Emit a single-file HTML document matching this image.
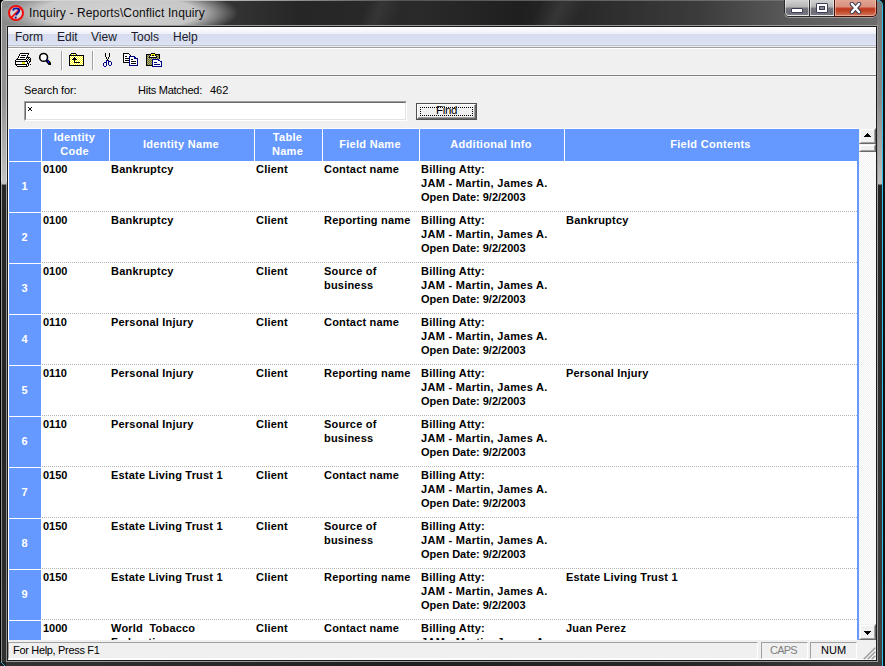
<!DOCTYPE html>
<html><head><meta charset="utf-8">
<style>
*{margin:0;padding:0;box-sizing:border-box}
html,body{width:885px;height:666px;overflow:hidden;background:#222;font-family:"Liberation Sans",sans-serif}
.a{position:absolute}
svg{shape-rendering:crispEdges;display:block}
.mi{top:30px;font-size:12px;color:#1b1b2b;line-height:14px;white-space:nowrap}
.lbl{font-size:11px;color:#000;line-height:13px;white-space:nowrap}
.ht{letter-spacing:0.3px;top:127px;height:33px;display:flex;align-items:center;justify-content:center;text-align:center;color:#fff;font-weight:bold;font-size:11px;line-height:14px}
.hs{top:128px;width:1px;height:33px;background:#fff}
.rh{left:9px;width:32px;background:#6699ff;color:#fff;font-weight:bold;font-size:11px;display:flex;align-items:center;justify-content:center;padding-right:1px;padding-bottom:2px}
.rsep{left:9px;width:31px;height:1px;background:#fff}
.dot{left:42px;width:815px;height:1px;background:repeating-linear-gradient(90deg,#b6b6b6 0,#b6b6b6 1px,transparent 1px,transparent 2px)}
.c{font-weight:bold;font-size:11px;line-height:14px;color:#000;white-space:nowrap;letter-spacing:0.2px}
</style></head><body>
<!-- frame -->
<div class="a" style="left:0;top:0;width:885px;height:27px;background:linear-gradient(90deg,#8c8c8c 0,#7a7a7a 30px,#3a3a3a 200px,#262626 300px,#2a2a2a 420px,#1f1f1f 520px,#2c2c2c 600px,#3c3c3c 700px,#5a5a5a 790px,#6e6e6e 885px)"></div>
<div class="a" style="left:300px;top:0;width:140px;height:27px;background:linear-gradient(110deg,transparent 0,transparent 45%,rgba(255,255,255,0.06) 55%,transparent 70%)"></div>
<div class="a" style="left:480px;top:0;width:140px;height:27px;background:linear-gradient(115deg,transparent 0,transparent 40%,rgba(255,255,255,0.08) 55%,transparent 70%)"></div>
<div class="a" style="left:-2px;top:-14px;width:240px;height:54px;background:radial-gradient(ellipse 50% 50% at 50% 50%,rgba(212,212,212,1) 0%,rgba(205,205,205,0.95) 66%,rgba(170,170,170,0) 100%)"></div>
<div class="a" style="left:0;top:27px;width:8px;height:639px;background:linear-gradient(180deg,#8a8a8a 0,#939393 70px,#c2c2c2 157px,#262626 158px,#242424 400px,#303030 639px)"></div>
<div class="a" style="left:877px;top:0;width:8px;height:666px;background:linear-gradient(180deg,#767676 0,#8a8a8a 100px,#c0c0c0 184px,#262626 185px,#2a2a2a 330px,#3c3c3c 560px,#444 666px)"></div>
<div class="a" style="left:0;top:660px;width:885px;height:6px;background:linear-gradient(90deg,#333 0,#2a2a2a 150px,#1e1e1e 400px,#262626 700px,#3c3c3c 885px)"></div>
<div class="a" style="left:0;top:0;width:1px;height:666px;background:#000"></div>
<div class="a" style="left:1px;top:3px;width:1px;height:663px;background:linear-gradient(180deg,#c8c8c8 0,#e0e0e0 178px,#9a9a9a 182px,#8c8c8c 663px)"></div>
<div class="a" style="left:0;top:0;width:885px;height:1px;background:linear-gradient(90deg,#000 0,#d8d8d8 6px,#c8c8c8 200px,#555 400px,#777 885px)"></div><svg class="a" style="left:0;top:0;shape-rendering:auto" width="8" height="8" viewBox="0 0 8 8"><rect width="8" height="8" fill="#8c8c8c"/><path d="M0 0 H4.5 Q1 0.5 1 4.5 V8 H0 Z" fill="#000"/><path d="M8 0.5 H5 Q1.5 0.5 1.5 5 V8" fill="none" stroke="#d8d8d8" stroke-width="1"/></svg>
<div class="a" style="left:6px;top:25px;width:872px;height:637px;border:1px solid #9a9a9a"></div>
<div class="a" style="left:7px;top:26px;width:870px;height:635px;border:1px solid #1a1a1a"></div><div class="a" style="left:6px;top:26px;width:1px;height:635px;background:linear-gradient(180deg,#b0b0b0 0,#e0e0e0 155px,#9a9a9a 160px,#8a8a8a 635px)"></div>
<div class="a" style="left:882px;top:6px;width:1px;height:660px;background:#2ec0ee"></div><svg class="a" style="left:877px;top:0;shape-rendering:auto" width="8" height="12" viewBox="0 0 8 12"><rect width="8" height="12" fill="#121010"/><path d="M0 0 H0.5 Q5.5 0.5 5.5 5.5 V12 H0 Z" fill="#7c7c7c"/><path d="M0 0.5 Q5.5 0.5 5.5 5.5 V12" fill="none" stroke="#2ec0ee" stroke-width="1"/></svg>
<div class="a" style="left:883px;top:6px;width:2px;height:660px;background:#141010"></div>
<div class="a" style="left:0;top:662px;width:6px;height:4px;background:linear-gradient(45deg,#1f1f1f 0,#1f1f1f 40%,#3aa6c8 50%,#1f1f1f 60%)"></div>
<!-- icon -->
<svg class="a" style="left:8px;top:5px;shape-rendering:auto" width="16" height="16" viewBox="0 0 16 16">
<circle cx="8" cy="8" r="7" fill="#d2d2d2" stroke="#f20d0d" stroke-width="2"/>
<line x1="13.2" y1="2.8" x2="2.8" y2="13.2" stroke="#f20d0d" stroke-width="1.7"/>
<path d="M5.1 5.6 C5.3 4.1 6.6 3.4 8.1 3.4 C9.9 3.4 11.2 4.4 11.2 5.8 C11.2 7.7 8.4 8.1 8 10.4" fill="none" stroke="#1414a0" stroke-width="1.8"/>
<circle cx="7.7" cy="12.5" r="1.1" fill="#1414a0"/>
</svg>
<div class="a" style="left:29px;top:6px;font-size:12px;line-height:15px;color:#0d0d0d;white-space:nowrap;letter-spacing:0.13px">Inquiry - Reports\Conflict Inquiry</div>
<!-- caption buttons -->
<div class="a" style="left:784px;top:-2px;width:93px;height:19px;border:1px solid #2a2a2a;border-radius:0 0 5px 5px;background:#555;box-shadow:0 1px 0 rgba(255,255,255,0.35)"></div>
<div class="a" style="left:785px;top:0;width:24px;height:16px;border:1px solid rgba(255,255,255,0.55);border-top:0;border-radius:0 0 0 4px;background:linear-gradient(180deg,#d2d2d2 0,#b4b4b4 7px,#7a7a82 8px,#6c6c76 12px,#80808a 16px)"></div>
<div class="a" style="left:809px;top:0;width:1px;height:16px;background:#2a2a2a"></div>
<div class="a" style="left:810px;top:0;width:24px;height:16px;border:1px solid rgba(255,255,255,0.55);border-top:0;background:linear-gradient(180deg,#d2d2d2 0,#b4b4b4 7px,#7a7a82 8px,#6c6c76 12px,#80808a 16px)"></div>
<div class="a" style="left:834px;top:0;width:43px;height:17px;border:1px solid #4a1008;border-top:0;border-radius:0 0 5px 0;background:linear-gradient(180deg,#e2a494 0,#d98f7c 7px,#c4432a 8px,#bf3b20 10px,#c85a3c 13px,#d27a60 16px)"></div>
<div class="a" style="left:835px;top:0;width:41px;height:16px;border:1px solid rgba(255,220,210,0.5);border-top:0;border-radius:0 0 4px 0"></div>
<div class="a" style="left:791px;top:8px;width:12px;height:5px;background:#fff;border:1px solid #3a3e58;border-radius:1px"></div>
<div class="a" style="left:816px;top:3px;width:12px;height:10px;background:#fff;border:1px solid #3a3e58;border-radius:1px"></div>
<div class="a" style="left:819px;top:6px;width:6px;height:4px;background:#8a8a90;border:1px solid #3a3e58"></div>
<svg class="a" style="left:849px;top:2px;shape-rendering:auto" width="13" height="12" viewBox="0 0 13 12">
<path d="M3 2 L10 10 M10 2 L3 10" fill="none" stroke="#3c405a" stroke-width="4.4" stroke-linecap="round"/>
<path d="M3 2 L10 10 M10 2 L3 10" fill="none" stroke="#fff" stroke-width="2.4" stroke-linecap="round"/>
</svg>
<!-- client -->
<div class="a" style="left:8px;top:27px;width:868px;height:633px;background:#f0f0f0"></div>
<div class="a" style="left:8px;top:27px;width:868px;height:18px;background:linear-gradient(180deg,#ffffff 0,#f0f3fb 6px,#e9edf8 7px,#d6dcee 7px,#d9dff0 14px,#dfe4f3 18px)"></div>
<div class="a" style="left:8px;top:45px;width:868px;height:1px;background:#bcc3d6"></div>
<div class="a" style="left:8px;top:46px;width:868px;height:1px;background:#ececec"></div>
<div class="a" style="left:8px;top:47px;width:868px;height:1px;background:#a0a0a0"></div>
<div class="a" style="left:8px;top:48px;width:868px;height:1px;background:#fff"></div>
<div class="a mi" style="left:15px">Form</div>
<div class="a mi" style="left:57px">Edit</div>
<div class="a mi" style="left:91px">View</div>
<div class="a mi" style="left:131px">Tools</div>
<div class="a mi" style="left:173px">Help</div>
<!-- toolbar -->
<div class="a" style="left:8px;top:74px;width:868px;height:1px;background:#f8f8f8"></div>
<div class="a" style="left:8px;top:75px;width:868px;height:1px;background:#808080"></div>
<div class="a" style="left:8px;top:76px;width:868px;height:1px;background:#f8f8f8"></div>
<div class="a" style="left:61px;top:51px;width:1px;height:19px;background:#a0a0a0"></div>
<div class="a" style="left:62px;top:51px;width:1px;height:19px;background:#fff"></div>
<div class="a" style="left:92px;top:51px;width:1px;height:19px;background:#a0a0a0"></div>
<div class="a" style="left:93px;top:51px;width:1px;height:19px;background:#fff"></div>
<!-- printer -->
<svg class="a" style="left:13px;top:50px" width="20" height="20" viewBox="0 0 20 20"><rect x="7" y="3" width="9" height="1" fill="#000"/><rect x="6" y="4" width="1" height="1" fill="#000"/><rect x="7" y="4" width="8" height="1" fill="#fff"/><rect x="15" y="4" width="1" height="1" fill="#000"/><rect x="6" y="5" width="1" height="1" fill="#000"/><rect x="7" y="5" width="1" height="1" fill="#fff"/><rect x="8" y="5" width="5" height="1" fill="#000"/><rect x="13" y="5" width="1" height="1" fill="#fff"/><rect x="14" y="5" width="1" height="1" fill="#000"/><rect x="5" y="6" width="1" height="1" fill="#000"/><rect x="6" y="6" width="8" height="1" fill="#fff"/><rect x="14" y="6" width="1" height="1" fill="#000"/><rect x="5" y="7" width="1" height="1" fill="#000"/><rect x="6" y="7" width="1" height="1" fill="#fff"/><rect x="7" y="7" width="5" height="1" fill="#000"/><rect x="12" y="7" width="1" height="1" fill="#fff"/><rect x="13" y="7" width="4" height="1" fill="#000"/><rect x="4" y="8" width="1" height="1" fill="#000"/><rect x="5" y="8" width="8" height="1" fill="#fff"/><rect x="13" y="8" width="1" height="1" fill="#000"/><rect x="14" y="8" width="1" height="1" fill="#fff"/><rect x="15" y="8" width="1" height="1" fill="#000"/><rect x="16" y="8" width="1" height="1" fill="#fff"/><rect x="17" y="8" width="1" height="1" fill="#000"/><rect x="3" y="9" width="10" height="1" fill="#000"/><rect x="13" y="9" width="1" height="1" fill="#fff"/><rect x="14" y="9" width="1" height="1" fill="#000"/><rect x="15" y="9" width="1" height="1" fill="#fff"/><rect x="16" y="9" width="2" height="1" fill="#000"/><rect x="2" y="10" width="1" height="1" fill="#000"/><rect x="3" y="10" width="10" height="1" fill="#fff"/><rect x="13" y="10" width="1" height="1" fill="#000"/><rect x="14" y="10" width="1" height="1" fill="#fff"/><rect x="15" y="10" width="1" height="1" fill="#000"/><rect x="16" y="10" width="1" height="1" fill="#fff"/><rect x="17" y="10" width="1" height="1" fill="#000"/><rect x="2" y="11" width="13" height="1" fill="#000"/><rect x="15" y="11" width="1" height="1" fill="#fff"/><rect x="16" y="11" width="2" height="1" fill="#000"/><rect x="2" y="12" width="1" height="1" fill="#000"/><rect x="3" y="12" width="6" height="1" fill="#fff"/><rect x="9" y="12" width="3" height="1" fill="#e8e800"/><rect x="12" y="12" width="2" height="1" fill="#fff"/><rect x="14" y="12" width="1" height="1" fill="#000"/><rect x="15" y="12" width="1" height="1" fill="#fff"/><rect x="16" y="12" width="1" height="1" fill="#000"/><rect x="2" y="13" width="1" height="1" fill="#000"/><rect x="3" y="13" width="6" height="1" fill="#fff"/><rect x="9" y="13" width="3" height="1" fill="#e8e800"/><rect x="12" y="13" width="2" height="1" fill="#fff"/><rect x="14" y="13" width="2" height="1" fill="#000"/><rect x="2" y="14" width="12" height="1" fill="#000"/><rect x="14" y="14" width="1" height="1" fill="#fff"/><rect x="15" y="14" width="1" height="1" fill="#000"/><rect x="16" y="14" width="1" height="1" fill="#fff"/><rect x="17" y="14" width="1" height="1" fill="#000"/><rect x="3" y="15" width="1" height="1" fill="#000"/><rect x="4" y="15" width="9" height="1" fill="#fff"/><rect x="13" y="15" width="1" height="1" fill="#000"/><rect x="14" y="15" width="1" height="1" fill="#fff"/><rect x="15" y="15" width="1" height="1" fill="#000"/><rect x="4" y="16" width="11" height="1" fill="#000"/></svg>
<!-- magnifier -->
<svg class="a" style="left:36px;top:50px;shape-rendering:auto" width="20" height="20" viewBox="0 0 20 20">
<circle cx="7.6" cy="7.4" r="3.9" fill="#fff" stroke="#000" stroke-width="1.6"/>
<path d="M10.2 9.6 L12 9.4 L15 12.6 L15 15 L12.6 15 L9.8 11.6 Z" fill="#000"/>
<rect x="10.2" y="9.2" width="1.3" height="1.4" fill="#1010c0"/><rect x="11.8" y="11" width="1.2" height="2" fill="#1010f0"/>
</svg>
<!-- folder -->
<svg class="a" style="left:66px;top:50px" width="20" height="20" viewBox="0 0 20 20">
<defs><pattern id="ck" width="2" height="2" patternUnits="userSpaceOnUse"><rect width="2" height="2" fill="#ffff00"/><rect width="1" height="1" fill="#fff"/><rect x="1" y="1" width="1" height="1" fill="#fff"/></pattern>
<pattern id="ol" width="2" height="2" patternUnits="userSpaceOnUse"><rect width="2" height="2" fill="#808000"/><rect width="1" height="1" fill="#a0a0a0"/><rect x="1" y="1" width="1" height="1" fill="#a0a0a0"/></pattern></defs>
<rect x="5" y="3" width="5" height="1" fill="#000"/><rect x="4" y="4" width="7" height="1" fill="#000"/><rect x="5" y="4" width="5" height="1" fill="url(#ck)"/>
<rect x="3" y="5" width="15" height="11" fill="#000"/><rect x="4" y="6" width="13" height="9" fill="url(#ck)"/>
<g fill="#000"><rect x="8" y="7" width="1" height="1"/><rect x="7" y="8" width="3" height="1"/><rect x="6" y="9" width="5" height="1"/><rect x="8" y="10" width="1" height="3"/><rect x="8" y="12" width="6" height="1"/></g>
</svg>
<!-- scissors -->
<svg class="a" style="left:98px;top:50px" width="20" height="20" viewBox="0 0 20 20">
<g fill="#000"><rect x="7" y="3" width="1" height="4"/><rect x="11" y="3" width="1" height="4"/><rect x="8" y="7" width="1" height="2"/><rect x="10" y="7" width="1" height="2"/><rect x="9" y="9" width="1" height="2"/></g>
<g fill="#000088"><rect x="8" y="10" width="1" height="1"/><rect x="10" y="10" width="1" height="1"/><rect x="6" y="12" width="2" height="1"/><rect x="5" y="13" width="1" height="3"/><rect x="8" y="11" width="1" height="5"/><rect x="6" y="16" width="2" height="1"/>
<rect x="10" y="11" width="1" height="4"/><rect x="11" y="11" width="2" height="1"/><rect x="13" y="12" width="1" height="3"/><rect x="11" y="15" width="2" height="1"/></g>
</svg>
<!-- copy -->
<svg class="a" style="left:120px;top:50px" width="20" height="20" viewBox="0 0 20 20">
<rect x="3" y="3" width="6" height="10" fill="#000"/><rect x="4" y="4" width="5" height="8" fill="#fff"/>
<rect x="9" y="4" width="1" height="1" fill="#000"/><rect x="10" y="5" width="1" height="1" fill="#000"/>
<g fill="#000"><rect x="5" y="6" width="2" height="1"/><rect x="5" y="8" width="4" height="1"/><rect x="5" y="10" width="4" height="1"/></g>
<rect x="9" y="6" width="9" height="10" fill="#000088"/><rect x="10" y="7" width="7" height="8" fill="#fff"/>
<rect x="15" y="6" width="3" height="2" fill="#f0f0f0"/><rect x="14" y="7" width="1" height="2" fill="#000088"/><rect x="15" y="8" width="2" height="1" fill="#000088"/><rect x="15" y="7" width="1" height="1" fill="#000088"/><rect x="16" y="8" width="1" height="1" fill="#000088"/>
<g fill="#000"><rect x="11" y="9" width="2" height="1"/><rect x="11" y="11" width="5" height="1"/><rect x="11" y="13" width="5" height="1"/></g>
</svg>
<!-- paste -->
<svg class="a" style="left:144px;top:50px" width="20" height="20" viewBox="0 0 20 20">
<rect x="2" y="4" width="14" height="12" fill="#000"/><rect x="3" y="5" width="12" height="10" fill="url(#ol)"/>
<rect x="7" y="3" width="4" height="1" fill="#000"/><rect x="6" y="4" width="6" height="2" fill="#000"/><rect x="7" y="4" width="4" height="2" fill="#ffff00"/><rect x="8" y="5" width="2" height="1" fill="#000"/>
<rect x="5" y="6" width="8" height="2" fill="#000"/><rect x="6" y="6" width="6" height="1" fill="#fff"/>
<rect x="8" y="9" width="10" height="8" fill="#000088"/><rect x="9" y="10" width="8" height="6" fill="#fff"/>
<rect x="15" y="9" width="3" height="2" fill="#f0f0f0"/><rect x="14" y="10" width="2" height="1" fill="#000088"/><rect x="16" y="11" width="1" height="1" fill="#000088"/>
<g fill="#000088"><rect x="10" y="12" width="3" height="1"/><rect x="10" y="14" width="6" height="1"/></g>
</svg>
<!-- search row -->
<div class="a lbl" style="left:24px;top:84px;letter-spacing:-0.12px">Search for:</div>
<div class="a lbl" style="left:138px;top:84px;letter-spacing:-0.25px">Hits Matched:</div>
<div class="a lbl" style="left:210px;top:84px">462</div>
<div class="a" style="left:24px;top:101px;width:383px;height:20px;background:#fff;border-top:1px solid #a0a0a0;border-left:1px solid #a0a0a0;border-right:1px solid #fff;border-bottom:1px solid #fff"></div>
<div class="a" style="left:25px;top:102px;width:381px;height:18px;border-top:1px solid #696969;border-left:1px solid #696969;border-right:1px solid #e3e3e3;border-bottom:1px solid #e3e3e3"></div>
<svg class="a" style="left:28px;top:107px" width="4" height="4"><rect x="0" y="0" width="1" height="1"/><rect x="3" y="0" width="1" height="1"/><rect x="1" y="1" width="2" height="2"/><rect x="0" y="3" width="1" height="1"/><rect x="3" y="3" width="1" height="1"/></svg>
<div class="a" style="left:416px;top:103px;width:61px;height:17px;background:#f0f0f0;border:1px solid #505050"></div>
<div class="a" style="left:417px;top:104px;width:59px;height:15px;border-top:1px solid #fff;border-left:1px solid #fff;border-right:1px solid #696969;border-bottom:1px solid #696969"></div>
<div class="a" style="left:418px;top:105px;width:57px;height:13px;border-right:1px solid #a0a0a0;border-bottom:1px solid #a0a0a0"></div>
<div class="a" style="left:420px;top:107px;width:53px;height:9px;background:repeating-linear-gradient(90deg,#000 0 1px,transparent 1px 2px) top/100% 1px no-repeat,repeating-linear-gradient(90deg,#000 0 1px,transparent 1px 2px) bottom/100% 1px no-repeat,repeating-linear-gradient(180deg,#000 0 1px,transparent 1px 2px) left/1px 100% no-repeat,repeating-linear-gradient(180deg,#000 0 1px,transparent 1px 2px) right/1px 100% no-repeat"></div>
<div class="a lbl" style="left:436px;top:104px;font-size:11.5px;letter-spacing:-0.35px">Find</div>
<!-- grid -->
<div class="a" style="left:8px;top:128px;width:851px;height:512px;background:#fff"></div>
<div class="a" style="left:9px;top:129px;width:850px;height:32px;background:#6699ff"></div>
<div class="a hs" style="left:41px"></div>
<div class="a hs" style="left:109px"></div>
<div class="a hs" style="left:254px"></div>
<div class="a hs" style="left:322px"></div>
<div class="a hs" style="left:419px"></div>
<div class="a hs" style="left:564px"></div>
<div class="a ht" style="left:41px;width:67px">Identity<br>Code</div>
<div class="a ht" style="left:109px;width:144px">Identity Name</div>
<div class="a ht" style="left:254px;width:67px">Table<br>Name</div>
<div class="a ht" style="left:322px;width:96px">Field Name</div>
<div class="a ht" style="left:419px;width:144px">Additional Info</div>
<div class="a ht" style="left:564px;width:293px">Field Contents</div>
<div class="a" style="left:857px;top:161px;width:2px;height:479px;background:#6699ff"></div>
<div class="a" style="left:0;top:0;width:857px;height:640px;overflow:hidden">
<div class="a rh" style="top:162px;height:50px">1</div>
<div class="a dot" style="top:211px"></div>
<div class="a rsep" style="top:212px"></div>
<div class="a c" style="left:43px;top:162px;letter-spacing:0">0100</div>
<div class="a c" style="left:111px;top:162px">Bankruptcy</div>
<div class="a c" style="left:256px;top:162px">Client</div>
<div class="a c" style="left:324px;top:162px">Contact name</div>
<div class="a c" style="left:421px;top:162px">Billing Atty:<br><span style="letter-spacing:0.3px">JAM - Martin, James A.</span><br><span style="letter-spacing:0">Open Date: 9/2/2003</span></div>
<div class="a rh" style="top:213px;height:50px">2</div>
<div class="a dot" style="top:262px"></div>
<div class="a rsep" style="top:263px"></div>
<div class="a c" style="left:43px;top:213px;letter-spacing:0">0100</div>
<div class="a c" style="left:111px;top:213px">Bankruptcy</div>
<div class="a c" style="left:256px;top:213px">Client</div>
<div class="a c" style="left:324px;top:213px">Reporting name</div>
<div class="a c" style="left:421px;top:213px">Billing Atty:<br><span style="letter-spacing:0.3px">JAM - Martin, James A.</span><br><span style="letter-spacing:0">Open Date: 9/2/2003</span></div>
<div class="a c" style="left:566px;top:213px">Bankruptcy</div>
<div class="a rh" style="top:264px;height:50px">3</div>
<div class="a dot" style="top:313px"></div>
<div class="a rsep" style="top:314px"></div>
<div class="a c" style="left:43px;top:264px;letter-spacing:0">0100</div>
<div class="a c" style="left:111px;top:264px">Bankruptcy</div>
<div class="a c" style="left:256px;top:264px">Client</div>
<div class="a c" style="left:324px;top:264px">Source of<br>business</div>
<div class="a c" style="left:421px;top:264px">Billing Atty:<br><span style="letter-spacing:0.3px">JAM - Martin, James A.</span><br><span style="letter-spacing:0">Open Date: 9/2/2003</span></div>
<div class="a rh" style="top:315px;height:50px">4</div>
<div class="a dot" style="top:364px"></div>
<div class="a rsep" style="top:365px"></div>
<div class="a c" style="left:43px;top:315px;letter-spacing:0">0110</div>
<div class="a c" style="left:111px;top:315px">Personal Injury</div>
<div class="a c" style="left:256px;top:315px">Client</div>
<div class="a c" style="left:324px;top:315px">Contact name</div>
<div class="a c" style="left:421px;top:315px">Billing Atty:<br><span style="letter-spacing:0.3px">JAM - Martin, James A.</span><br><span style="letter-spacing:0">Open Date: 9/2/2003</span></div>
<div class="a rh" style="top:366px;height:50px">5</div>
<div class="a dot" style="top:415px"></div>
<div class="a rsep" style="top:416px"></div>
<div class="a c" style="left:43px;top:366px;letter-spacing:0">0110</div>
<div class="a c" style="left:111px;top:366px">Personal Injury</div>
<div class="a c" style="left:256px;top:366px">Client</div>
<div class="a c" style="left:324px;top:366px">Reporting name</div>
<div class="a c" style="left:421px;top:366px">Billing Atty:<br><span style="letter-spacing:0.3px">JAM - Martin, James A.</span><br><span style="letter-spacing:0">Open Date: 9/2/2003</span></div>
<div class="a c" style="left:566px;top:366px">Personal Injury</div>
<div class="a rh" style="top:417px;height:50px">6</div>
<div class="a dot" style="top:466px"></div>
<div class="a rsep" style="top:467px"></div>
<div class="a c" style="left:43px;top:417px;letter-spacing:0">0110</div>
<div class="a c" style="left:111px;top:417px">Personal Injury</div>
<div class="a c" style="left:256px;top:417px">Client</div>
<div class="a c" style="left:324px;top:417px">Source of<br>business</div>
<div class="a c" style="left:421px;top:417px">Billing Atty:<br><span style="letter-spacing:0.3px">JAM - Martin, James A.</span><br><span style="letter-spacing:0">Open Date: 9/2/2003</span></div>
<div class="a rh" style="top:468px;height:50px">7</div>
<div class="a dot" style="top:517px"></div>
<div class="a rsep" style="top:518px"></div>
<div class="a c" style="left:43px;top:468px;letter-spacing:0">0150</div>
<div class="a c" style="left:111px;top:468px">Estate Living Trust 1</div>
<div class="a c" style="left:256px;top:468px">Client</div>
<div class="a c" style="left:324px;top:468px">Contact name</div>
<div class="a c" style="left:421px;top:468px">Billing Atty:<br><span style="letter-spacing:0.3px">JAM - Martin, James A.</span><br><span style="letter-spacing:0">Open Date: 9/2/2003</span></div>
<div class="a rh" style="top:519px;height:50px">8</div>
<div class="a dot" style="top:568px"></div>
<div class="a rsep" style="top:569px"></div>
<div class="a c" style="left:43px;top:519px;letter-spacing:0">0150</div>
<div class="a c" style="left:111px;top:519px">Estate Living Trust 1</div>
<div class="a c" style="left:256px;top:519px">Client</div>
<div class="a c" style="left:324px;top:519px">Source of<br>business</div>
<div class="a c" style="left:421px;top:519px">Billing Atty:<br><span style="letter-spacing:0.3px">JAM - Martin, James A.</span><br><span style="letter-spacing:0">Open Date: 9/2/2003</span></div>
<div class="a rh" style="top:570px;height:50px">9</div>
<div class="a dot" style="top:619px"></div>
<div class="a rsep" style="top:620px"></div>
<div class="a c" style="left:43px;top:570px;letter-spacing:0">0150</div>
<div class="a c" style="left:111px;top:570px">Estate Living Trust 1</div>
<div class="a c" style="left:256px;top:570px">Client</div>
<div class="a c" style="left:324px;top:570px">Reporting name</div>
<div class="a c" style="left:421px;top:570px">Billing Atty:<br><span style="letter-spacing:0.3px">JAM - Martin, James A.</span><br><span style="letter-spacing:0">Open Date: 9/2/2003</span></div>
<div class="a c" style="left:566px;top:570px">Estate Living Trust 1</div>
<div class="a rh" style="top:621px;height:19px"></div>
<div class="a c" style="left:43px;top:621px;letter-spacing:0">1000</div>
<div class="a c" style="left:111px;top:621px">World&nbsp; Tobacco<br>Federation</div>
<div class="a c" style="left:256px;top:621px">Client</div>
<div class="a c" style="left:324px;top:621px">Contact name</div>
<div class="a c" style="left:421px;top:621px">Billing Atty:<br><span style="letter-spacing:0.3px">JAM - Martin, James A.</span><br><span style="letter-spacing:0">Open Date: 9/2/2003</span></div>
<div class="a c" style="left:566px;top:621px">Juan Perez</div>
</div>
<div class="a" style="left:8px;top:128px;width:851px;height:1px;background:#fff"></div>
<div class="a" style="left:8px;top:128px;width:1px;height:512px;background:#fff"></div>
<!-- scrollbar -->
<div class="a" style="left:859px;top:128px;width:17px;height:512px;background:repeating-conic-gradient(#fff 0 25%,#f0f0f0 0 50%) 0 0/2px 2px"></div>
<div class="a" style="left:859px;top:128px;width:17px;height:16px;background:#f0f0f0;border-top:1px solid #f0f0f0;border-left:1px solid #f0f0f0;border-right:1px solid #696969;border-bottom:1px solid #696969"></div>
<div class="a" style="left:860px;top:129px;width:15px;height:14px;border-top:1px solid #fff;border-left:1px solid #fff;border-right:1px solid #a0a0a0;border-bottom:1px solid #a0a0a0"></div>
<svg class="a" style="left:864px;top:133px" width="7" height="4"><rect x="3" y="0" width="1" height="1"/><rect x="2" y="1" width="3" height="1"/><rect x="1" y="2" width="5" height="1"/><rect x="0" y="3" width="7" height="1"/></svg>
<div class="a" style="left:859px;top:144px;width:17px;height:8px;background:#f0f0f0;border-top:1px solid #f0f0f0;border-left:1px solid #f0f0f0;border-right:1px solid #696969;border-bottom:1px solid #696969"></div>
<div class="a" style="left:860px;top:145px;width:15px;height:6px;border-top:1px solid #fff;border-left:1px solid #fff;border-right:1px solid #a0a0a0;border-bottom:1px solid #a0a0a0"></div>
<div class="a" style="left:859px;top:624px;width:17px;height:16px;background:#f0f0f0;border-top:1px solid #f0f0f0;border-left:1px solid #f0f0f0;border-right:1px solid #696969;border-bottom:1px solid #696969"></div>
<div class="a" style="left:860px;top:625px;width:15px;height:14px;border-top:1px solid #fff;border-left:1px solid #fff;border-right:1px solid #a0a0a0;border-bottom:1px solid #a0a0a0"></div>
<svg class="a" style="left:864px;top:631px" width="7" height="4"><rect x="0" y="0" width="7" height="1"/><rect x="1" y="1" width="5" height="1"/><rect x="2" y="2" width="3" height="1"/><rect x="3" y="3" width="1" height="1"/></svg>
<!-- status bar -->
<div class="a" style="left:8px;top:640px;width:868px;height:19px;background:#f0f0f0"></div>
<div class="a" style="left:8px;top:642px;width:750px;height:17px;border-top:1px solid #a0a0a0;border-left:1px solid #a0a0a0;border-right:1px solid #fff;border-bottom:1px solid #fff"></div>
<div class="a" style="left:761px;top:642px;width:47px;height:17px;border-top:1px solid #a0a0a0;border-left:1px solid #a0a0a0;border-right:1px solid #fff;border-bottom:1px solid #fff"></div>
<div class="a" style="left:810px;top:642px;width:47px;height:17px;border-top:1px solid #a0a0a0;border-left:1px solid #a0a0a0;border-right:1px solid #fff;border-bottom:1px solid #fff"></div>
<div class="a" style="left:8px;top:659px;width:868px;height:1px;background:#fff"></div>
<div class="a lbl" style="left:13px;top:644px;letter-spacing:-0.32px">For Help, Press F1</div>
<div class="a lbl" style="left:770px;top:644px;color:#808080;letter-spacing:-0.75px">CAPS</div>
<div class="a lbl" style="left:821px;top:644px;letter-spacing:0px">NUM</div>
<svg class="a" style="left:862px;top:646px;shape-rendering:auto" width="14" height="14" viewBox="0 0 14 14"><path d="M12.8 2.2 L2.2 12.8 M12.8 6.2 L6.2 12.8 M12.8 10.2 L10.2 12.8" stroke="#a0a0a0" stroke-width="1.6" stroke-linecap="round"/></svg>
</body></html>
